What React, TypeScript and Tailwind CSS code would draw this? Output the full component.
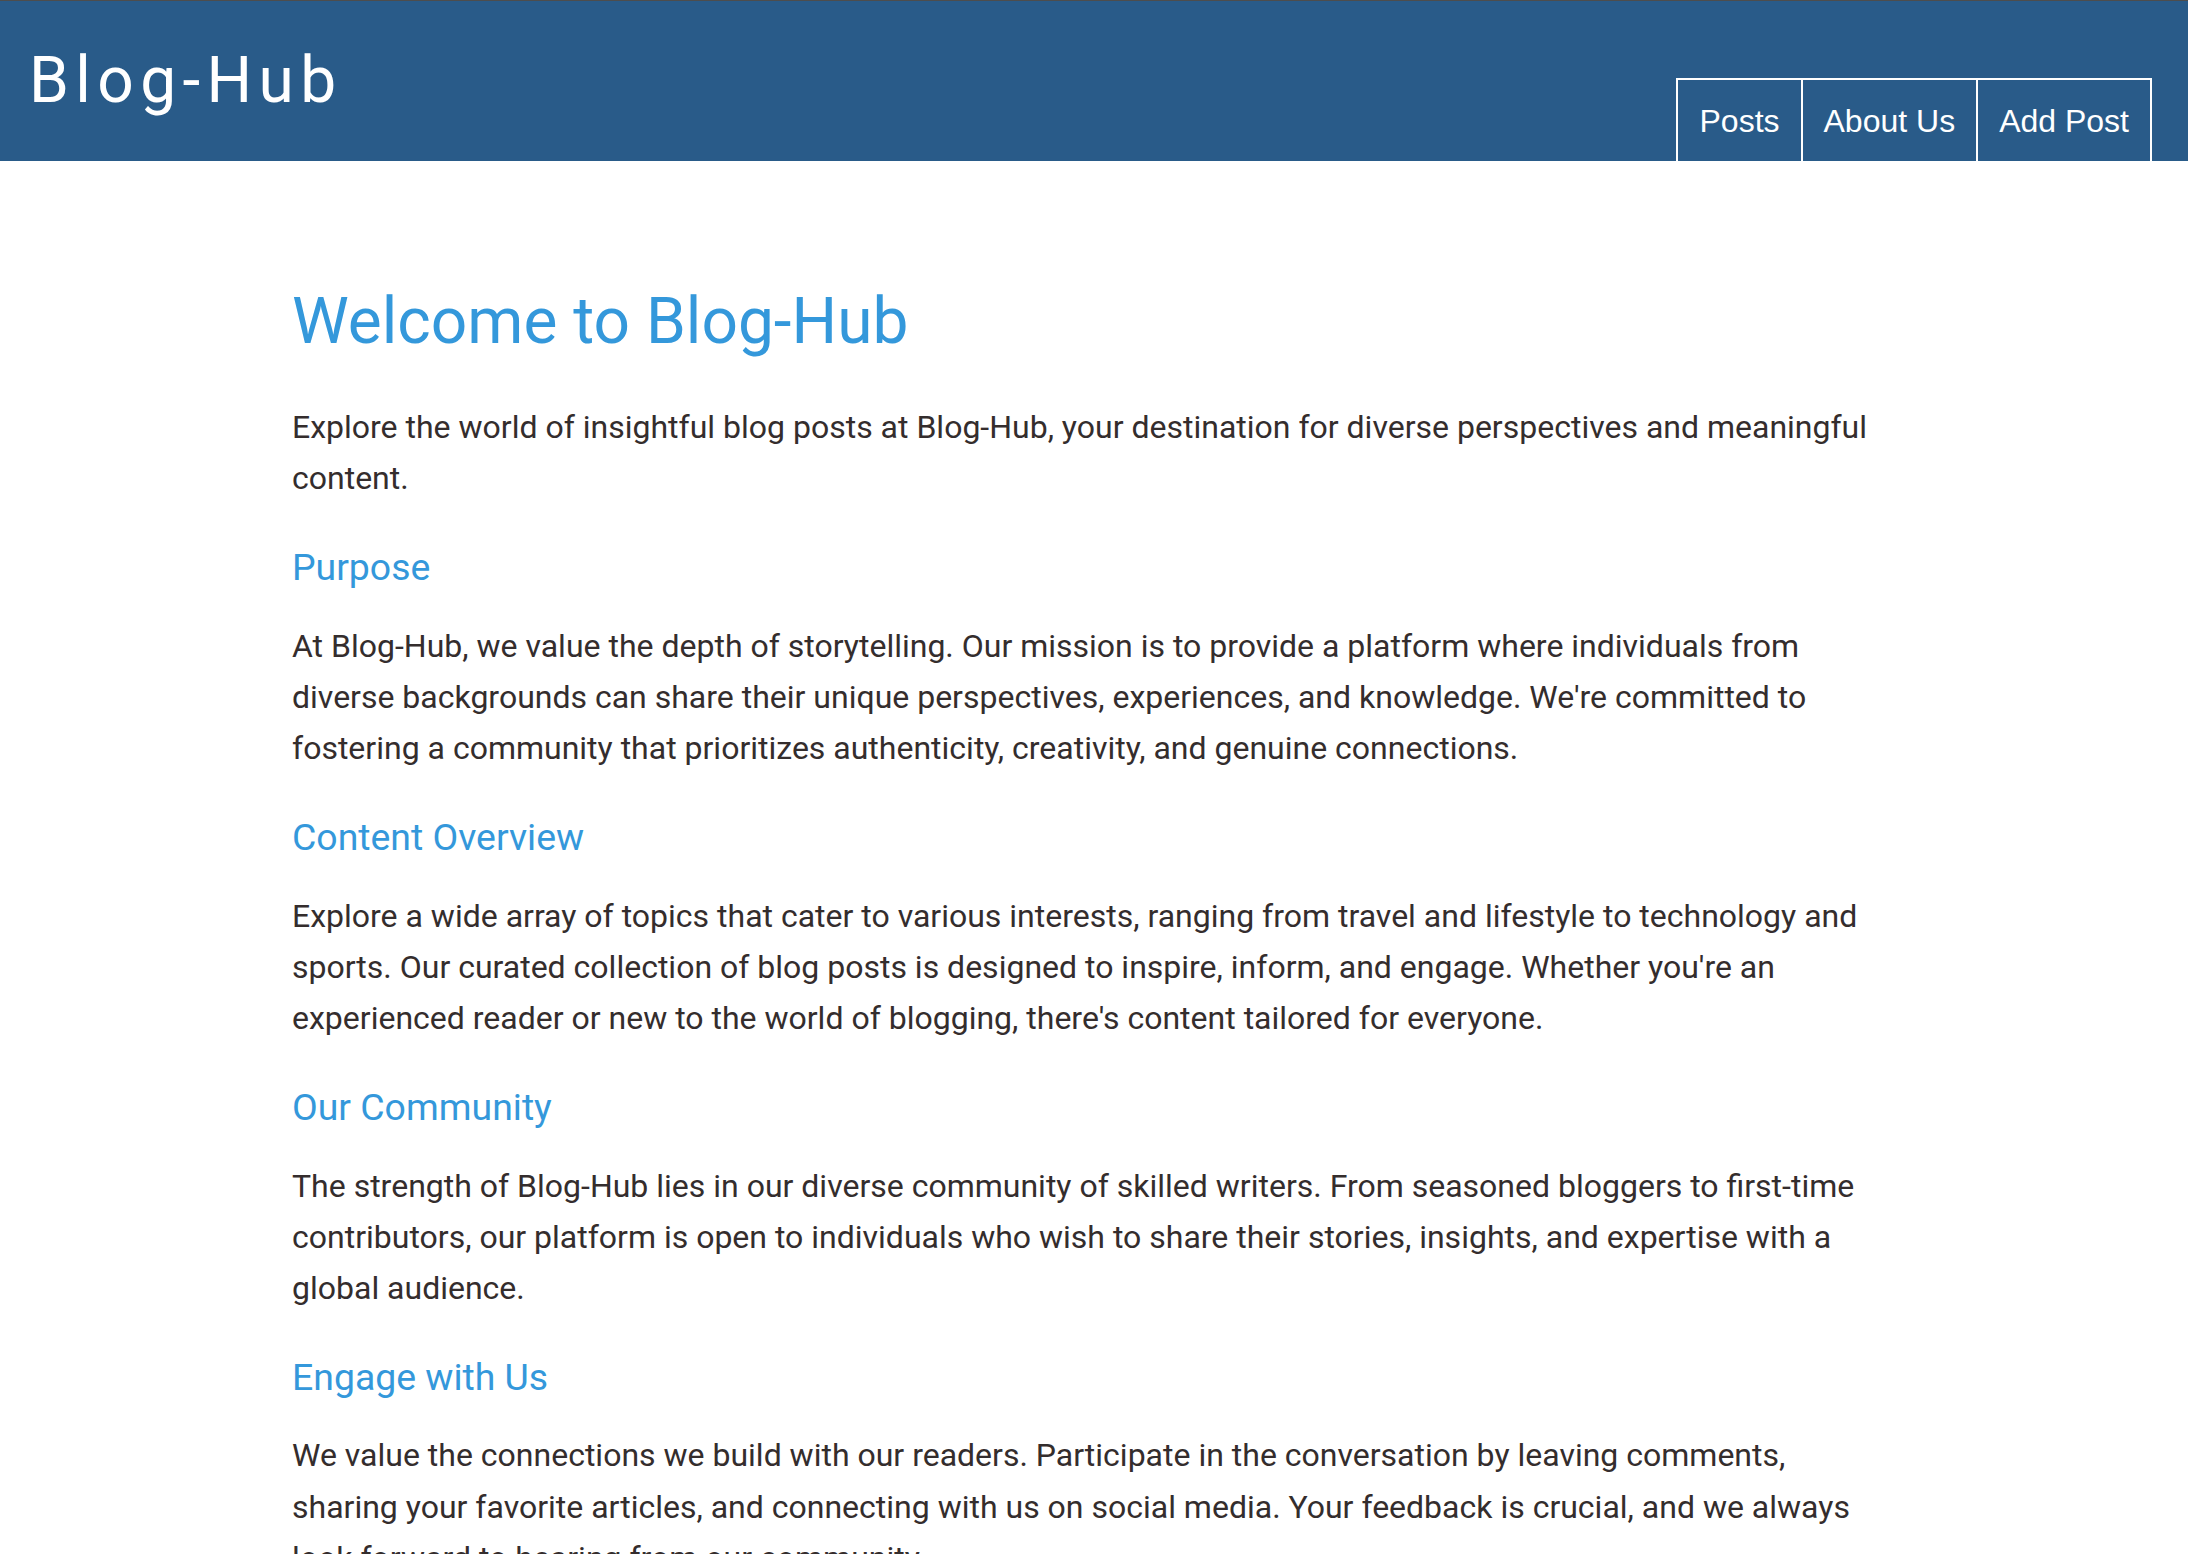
import React from "react";

const sections = [
  {
    title: "Purpose",
    body: "At Blog-Hub, we value the depth of storytelling. Our mission is to provide a platform where individuals from diverse backgrounds can share their unique perspectives, experiences, and knowledge. We're committed to fostering a community that prioritizes authenticity, creativity, and genuine connections.",
  },
  {
    title: "Content Overview",
    body: "Explore a wide array of topics that cater to various interests, ranging from travel and lifestyle to technology and sports. Our curated collection of blog posts is designed to inspire, inform, and engage. Whether you're an experienced reader or new to the world of blogging, there's content tailored for everyone.",
  },
  {
    title: "Our Community",
    body: "The strength of Blog-Hub lies in our diverse community of skilled writers. From seasoned bloggers to first-time contributors, our platform is open to individuals who wish to share their stories, insights, and expertise with a global audience.",
  },
  {
    title: "Engage with Us",
    body: "We value the connections we build with our readers. Participate in the conversation by leaving comments, sharing your favorite articles, and connecting with us on social media. Your feedback is crucial, and we always look forward to hearing from our community.",
  },
];

const navLinks = ["Posts", "About Us", "Add Post"];

const Header: React.FC = () => {
  return (
    <header className="h-[161px] border-t border-[#4d4d4d] bg-[#295b89] flex justify-between">
      <h1 className="pl-[29px] pt-[48px] text-[64px] leading-[64px] tracking-widest text-white font-normal font-['Roboto',sans-serif]">
        Blog-Hub
      </h1>
      <nav className="flex self-end mr-[36px]">
        {navLinks.map((link) => (
          <a
            key={link}
            href="#"
            className="h-[83px] px-[21px] pt-[17px] border-t-2 border-l-2 last:border-r-2 border-white text-white text-[32px] font-['Liberation_Sans',Arial,sans-serif]"
          >
            {link}
          </a>
        ))}
      </nav>
    </header>
  );
};

export default function App() {
  return (
    <div className="min-h-screen bg-white font-['Roboto',sans-serif] text-[#342d2d]">
      <Header />
      <main className="ml-[292px] w-[1580px] pt-[123px] pb-[40px]">
        <h1 className="text-[64px] leading-[1.2] font-normal text-[#3498db] mb-[41px]">
          Welcome to Blog-Hub
        </h1>
        <p className="text-[32px] leading-[1.6]">
          Explore the world of insightful blog posts at Blog-Hub, your
          destination for diverse perspectives and meaningful content.
        </p>
        {sections.map((s) => (
          <section key={s.title}>
            <h2 className="mt-[33px] mb-[22px] text-[37.4px] leading-[61.4px] font-normal text-[#3498db]">
              {s.title}
            </h2>
            <p className="text-[32px] leading-[1.6]">{s.body}</p>
          </section>
        ))}
      </main>
    </div>
  );
}
